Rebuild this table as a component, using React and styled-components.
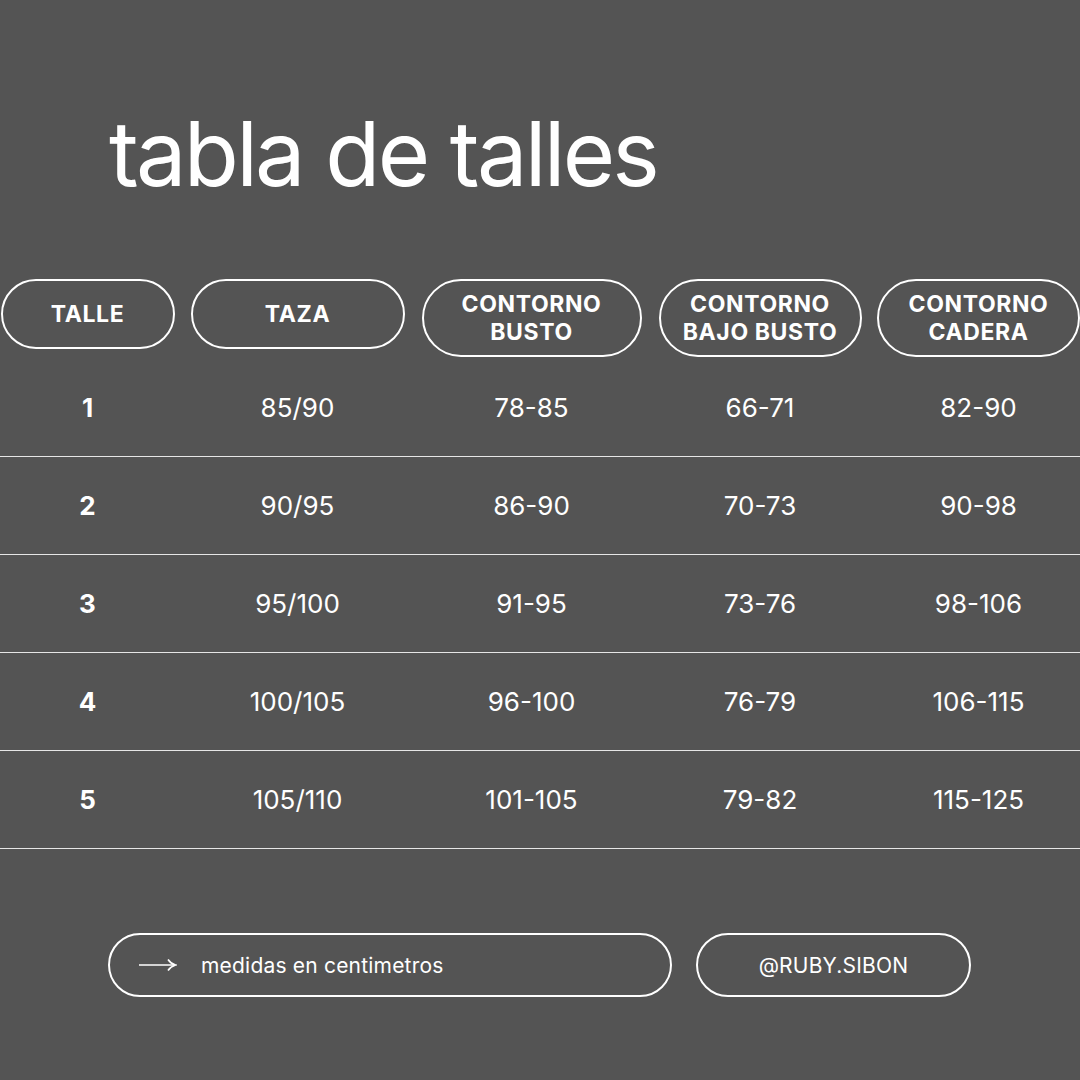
import React from "react";
import styled, { createGlobalStyle } from "styled-components";

const Global = createGlobalStyle`
  html, body {
    margin: 0;
    padding: 0;
    background: #545454;
  }
  * { box-sizing: border-box; }
`;

const Page = styled.div`
  width: 1080px;
  height: 1080px;
  background: #545454;
  color: #ffffff;
  font-family: Inter, "Noto Sans", sans-serif;
  display: flex;
  flex-direction: column;
  overflow: hidden;
`;

const Title = styled.h1`
  margin: 0;
  padding: 99px 0 0 109px;
  height: 279px;
  font-size: 90px;
  line-height: 110px;
  font-weight: 400;
  letter-spacing: -2.8px;
`;

const COLS = "175px 245px 223px 234px 203px";

const HeadRow = styled.div`
  display: grid;
  grid-template-columns: ${COLS};
  align-items: start;
  height: 80px;
`;

const Pill = styled.div`
  justify-self: center;
  width: ${({ $w }) => $w}px;
  height: ${({ $two }) => ($two ? 78 : 70)}px;
  border: 2px solid #ffffff;
  border-radius: 40px;
  display: flex;
  align-items: center;
  justify-content: center;
  text-align: center;
  font-weight: 700;
  font-size: 23px;
  line-height: 28px;
  letter-spacing: 0.6px;
`;

const Row = styled.div`
  display: grid;
  grid-template-columns: ${COLS};
  align-items: center;
  height: 98px;
  border-bottom: 1px solid #e6e6e6;
`;

const Cell = styled.div`
  text-align: center;
  font-size: 26px;
  font-weight: ${({ $bold }) => ($bold ? 700 : 400)};
`;

const Footer = styled.div`
  display: flex;
  gap: 24px;
  padding: 84px 0 0 108px;
`;

const FootPill = styled.div`
  height: 64px;
  width: ${({ $w }) => $w}px;
  border: 2px solid #ffffff;
  border-radius: 32px;
  display: flex;
  align-items: center;
  justify-content: ${({ $center }) => ($center ? "center" : "flex-start")};
  padding-left: ${({ $center }) => ($center ? 0 : 29)}px;
  gap: 24px;
  font-size: 21px;
  letter-spacing: 0.2px;
`;

const Arrow = () => (
  <svg width="38" height="14" viewBox="0 0 38 14" fill="none">
    <path d="M0 7H36" stroke="#fff" strokeWidth="1.6" />
    <path d="M29 1.5C31 4.5 33 6 36.5 7C33 8 31 9.5 29 12.5" stroke="#fff" strokeWidth="1.6" />
  </svg>
);

const headers = [
  { label: ["TALLE"], w: 174 },
  { label: ["TAZA"], w: 214 },
  { label: ["CONTORNO", "BUSTO"], w: 220 },
  { label: ["CONTORNO", "BAJO BUSTO"], w: 203 },
  { label: ["CONTORNO", "CADERA"], w: 203 },
];

const rows = [
  ["1", "85/90", "78-85", "66-71", "82-90"],
  ["2", "90/95", "86-90", "70-73", "90-98"],
  ["3", "95/100", "91-95", "73-76", "98-106"],
  ["4", "100/105", "96-100", "76-79", "106-115"],
  ["5", "105/110", "101-105", "79-82", "115-125"],
];

export default function App() {
  return (
    <Page>
      <Global />
      <Title>tabla de talles</Title>
      <HeadRow>
        {headers.map((h) => (
          <Pill key={h.label.join()} $w={h.w} $two={h.label.length > 1}>
            <div>
              {h.label.map((l) => (
                <div key={l}>{l}</div>
              ))}
            </div>
          </Pill>
        ))}
      </HeadRow>
      {rows.map((r) => (
        <Row key={r[0]}>
          {r.map((v, i) => (
            <Cell key={i} $bold={i === 0}>
              {v}
            </Cell>
          ))}
        </Row>
      ))}
      <Footer>
        <FootPill $w={564}>
          <Arrow />
          medidas en centimetros
        </FootPill>
        <FootPill $w={275} $center>
          @RUBY.SIBON
        </FootPill>
      </Footer>
    </Page>
  );
}
